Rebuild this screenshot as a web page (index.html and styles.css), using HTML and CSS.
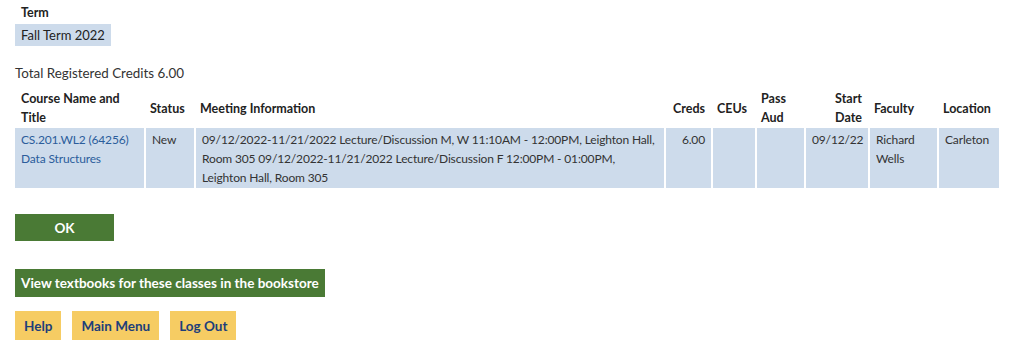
FILE: index.html
```html
<!DOCTYPE html>
<html>
<head>
<meta charset="utf-8">
<link rel="stylesheet" href="styles.css">
</head>
<body>
<div class="page">
  <div class="term-label">Term</div>
  <div class="term-value">Fall Term 2022</div>
  <div class="total">Total Registered Credits 6.00</div>
  <table class="sched">
    <colgroup>
      <col class="c1"><col class="c2"><col class="c3"><col class="c4"><col class="c5"><col class="c6"><col class="c7"><col class="c8"><col class="c9">
    </colgroup>
    <thead>
      <tr>
        <th>Course Name and Title</th>
        <th>Status</th>
        <th>Meeting Information</th>
        <th class="r">Creds</th>
        <th>CEUs</th>
        <th>Pass Aud</th>
        <th class="r">Start Date</th>
        <th>Faculty</th>
        <th>Location</th>
      </tr>
    </thead>
    <tbody>
      <tr>
        <td><a href="#" class="link">CS.201.WL2 (64256) Data Structures</a></td>
        <td>New</td>
        <td class="meet">09/12/2022-11/21/2022 Lecture/Discussion M, W 11:10AM - 12:00PM, Leighton Hall, Room 305 09/12/2022-11/21/2022 Lecture/Discussion F 12:00PM - 01:00PM, Leighton Hall, Room 305</td>
        <td class="r">6.00</td>
        <td></td>
        <td></td>
        <td class="r">09/12/22</td>
        <td>Richard Wells</td>
        <td>Carleton</td>
      </tr>
    </tbody>
  </table>
  <div class="actions">
    <button class="btn green ok">OK</button>
    <button class="btn green books">View textbooks for these classes in the bookstore</button>
    <div class="nav">
      <button class="btn yellow">Help</button>
      <button class="btn yellow">Main Menu</button>
      <button class="btn yellow">Log Out</button>
    </div>
  </div>
</div>
</body>
</html>
```
FILE: styles.css
```css
html, body {
  margin: 0;
  padding: 0;
  background: #fff;
}
body {
  font-family: Lato, "Liberation Sans", sans-serif;
  font-size: 13.4px;
  color: #333;
}
.page {
  padding: 3px 0 0 15px;
}
.term-label {
  font-weight: 700;
  font-size: 12.5px;
  color: #222;
  padding-left: 6px;
  line-height: 19px;
}
.term-value {
  display: inline-block;
  margin-top: 2px;
  background: #cddbeb;
  color: #222;
  font-size: 13px;
  padding: 0 6px;
  line-height: 22px;
  white-space: nowrap;
}
.total {
  margin-top: 18px;
  line-height: 19px;
}
.sched {
  margin-top: 6px;
  width: 984px;
  border-collapse: separate;
  border-spacing: 0;
  table-layout: fixed;
}
.c1 { width: 129px; }
.c2 { width: 50px; }
.c3 { width: 470px; }
.c4 { width: 47px; }
.c5 { width: 44px; }
.c6 { width: 49px; }
.c7 { width: 64px; }
.c8 { width: 69px; }
.c9 { width: 62px; }
.sched th {
  font-weight: 700;
  font-size: 12.5px;
  color: #222;
  text-align: left;
  vertical-align: middle;
  padding: 0 6px 1px;
  line-height: 19px;
}
.sched td {
  background: #cddbeb;
  vertical-align: top;
  padding: 2px 6px 1px;
  line-height: 19px;
  font-size: 12px;
  letter-spacing: -0.15px;
  color: #333;
}
.sched td + td {
  border-left: 2px solid #fff;
}
.sched td.meet {
  padding-right: 3px;
}
.sched .r {
  text-align: right;
}
.link {
  color: #2b5d9b;
  text-decoration: none;
}
.actions {
  display: flex;
  flex-direction: column;
  align-items: flex-start;
  margin-top: 26px;
}
.btn {
  font-family: inherit;
  font-size: 13.5px;
  font-weight: 700;
  border: none;
  margin: 0;
  cursor: pointer;
}
.green {
  background: #4a7a35;
  color: #fff;
}
.ok {
  width: 99px;
  height: 27px;
}
.books {
  margin-top: 28px;
  height: 28px;
  padding: 0 6px;
}
.nav {
  display: flex;
  gap: 11px;
  margin-top: 14px;
}
.yellow {
  background: #f6cc63;
  color: #1d3e7a;
  height: 29px;
  padding: 0 9px;
}
```
